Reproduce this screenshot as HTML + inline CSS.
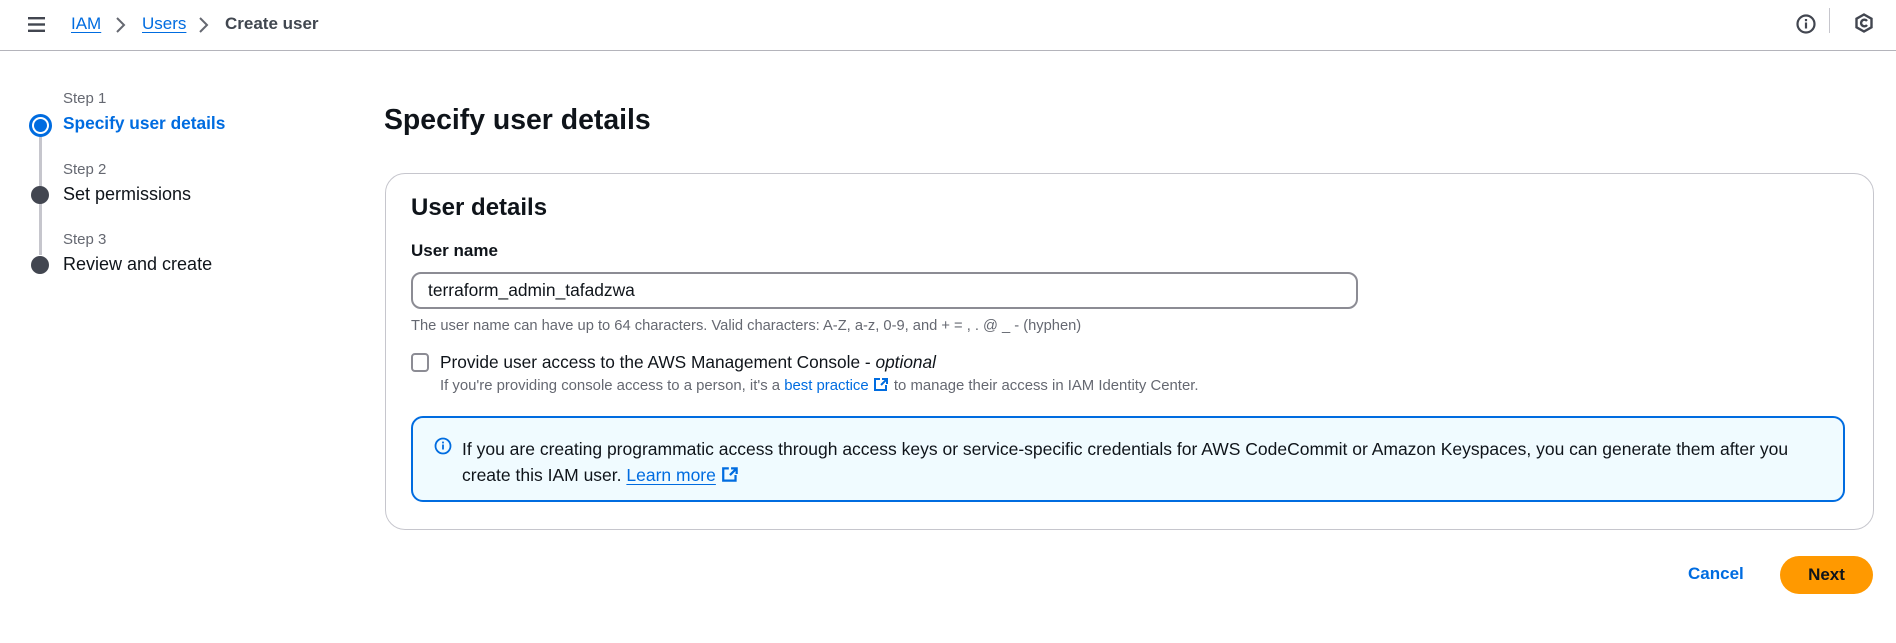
<!DOCTYPE html>
<html><head><meta charset="utf-8"><style>
*{box-sizing:border-box;margin:0;padding:0}
body{width:1896px;height:643px;background:#fff;font-family:"Liberation Sans",Arial,sans-serif;color:#0f141a;position:relative;overflow:hidden}
.a{position:absolute;white-space:nowrap}
.hdr{position:absolute;left:0;top:0;width:1896px;height:51px;border-bottom:1px solid #b4b4bb}
.link{color:#006ce0;text-decoration:underline;text-underline-offset:3px}
</style></head><body>
<div class="hdr"></div>
<svg class="a" style="left:27px;top:16px" width="20" height="17" viewBox="0 0 20 17"><rect x="1" y="1" width="17" height="2.4" fill="#424650"/><rect x="1" y="7.3" width="17" height="2.4" fill="#424650"/><rect x="1" y="13.6" width="17" height="2.4" fill="#424650"/></svg>
<div class="a link" style="left:71px;top:14px;font-size:17px">IAM</div>
<svg class="a" style="left:115px;top:16px" width="12" height="18" viewBox="0 0 12 18"><path d="M2 2l7 7-7 7" stroke="#656871" stroke-width="2" fill="none"/></svg>
<div class="a link" style="left:142px;top:14px;font-size:17px">Users</div>
<svg class="a" style="left:198px;top:16px" width="12" height="18" viewBox="0 0 12 18"><path d="M2 2l7 7-7 7" stroke="#656871" stroke-width="2" fill="none"/></svg>
<div class="a" style="left:225px;top:14px;font-size:17px;color:#414750;font-weight:bold">Create user</div>
<svg class="a" style="left:1795px;top:13px" width="22" height="22" viewBox="0 0 22 22"><circle cx="11" cy="11" r="8.5" stroke="#424650" stroke-width="2.2" fill="none"/><rect x="9.9" y="9.5" width="2.2" height="6" fill="#424650"/><rect x="9.9" y="6" width="2.2" height="2.2" fill="#424650"/></svg>
<div class="a" style="left:1829px;top:8px;width:1px;height:25px;background:#c6c6cd"></div>
<svg class="a" style="left:1853px;top:12px" width="22" height="22" viewBox="0 0 22 22"><path d="M11 2.5l7.5 4.2v8.6L11 19.5l-7.5-4.2V6.7z" stroke="#424650" stroke-width="2.4" fill="none"/><path d="M14 9a3.3 3.3 0 1 0 0 4" stroke="#424650" stroke-width="2.4" fill="none"/></svg>

<div class="a" style="left:39px;top:136px;width:3px;height:50px;background:#c6c6cd"></div>
<div class="a" style="left:39px;top:202px;width:3px;height:53px;background:#c6c6cd"></div>
<div class="a" style="left:29px;top:114px;width:23px;height:23px;border-radius:50%;border:3px solid #006ce0;background:#fff"></div>
<div class="a" style="left:34px;top:119px;width:13px;height:13px;border-radius:50%;background:#006ce0"></div>
<div class="a" style="left:31px;top:186px;width:18px;height:18px;border-radius:50%;background:#424650"></div>
<div class="a" style="left:31px;top:256px;width:18px;height:18px;border-radius:50%;background:#424650"></div>
<div class="a" style="left:63px;top:90px;font-size:15px;color:#656871">Step 1</div>
<div class="a" style="left:63px;top:113px;font-size:17.3px;color:#006ce0;font-weight:bold">Specify user details</div>
<div class="a" style="left:63px;top:161px;font-size:15px;color:#656871">Step 2</div>
<div class="a" style="left:63px;top:184px;font-size:18px;color:#0f141a">Set permissions</div>
<div class="a" style="left:63px;top:231px;font-size:15px;color:#656871">Step 3</div>
<div class="a" style="left:63px;top:254px;font-size:18px;color:#0f141a">Review and create</div>

<div class="a" style="left:384px;top:104px;font-size:28.4px;font-weight:bold">Specify user details</div>

<div class="a" style="left:385px;top:173px;width:1489px;height:357px;border:1px solid #c6c6cd;border-radius:20px"></div>
<div class="a" style="left:411px;top:194px;font-size:24px;font-weight:bold">User details</div>
<div class="a" style="left:411px;top:241px;font-size:17px;font-weight:bold">User name</div>
<div class="a" style="left:411px;top:272px;width:947px;height:37px;border:2px solid #8c8c94;border-radius:10px"></div>
<div class="a" style="left:428px;top:280px;font-size:17.4px">terraform_admin_tafadzwa</div>
<div class="a" style="left:411px;top:318px;font-size:14.7px;color:#656871">The user name can have up to 64 characters. Valid characters: A-Z, a-z, 0-9, and + = , . @ _ - (hyphen)</div>
<div class="a" style="left:411px;top:353px;width:18px;height:19px;border:2px solid #8c8c94;border-radius:4px"></div>
<div class="a" style="left:440px;top:352px;font-size:17.3px">Provide user access to the AWS Management Console - <i>optional</i></div>
<div class="a" style="left:440px;top:377px;font-size:14.9px;color:#656871">If you're providing console access to a person, it's a <span style="color:#006ce0">best practice</span> <svg width="17" height="15" viewBox="0 0 17 15" style="vertical-align:-2px"><path d="M7 2H2v11h11V8M9 2h5v5M14 2L8 8" stroke="#006ce0" stroke-width="2" fill="none"/></svg> to manage their access in IAM Identity Center.</div>

<div class="a" style="left:411px;top:416px;width:1434px;height:86px;border:2px solid #006ce0;border-radius:12px;background:#f0fbff"></div>
<svg class="a" style="left:434px;top:437px" width="18" height="18" viewBox="0 0 18 18"><circle cx="9" cy="9" r="7.5" stroke="#006ce0" stroke-width="1.8" fill="none"/><rect x="8.1" y="7.5" width="1.8" height="5" fill="#006ce0"/><rect x="8.1" y="4.6" width="1.8" height="1.8" fill="#006ce0"/></svg>
<div class="a" style="left:462px;top:436px;font-size:17.5px;line-height:26px">If you are creating programmatic access through access keys or service-specific credentials for AWS CodeCommit or Amazon Keyspaces, you can generate them after you<br>create this IAM user. <span class="link">Learn more</span> <svg width="19" height="17" viewBox="0 0 17 15" style="vertical-align:-2px"><path d="M7 2H2v11h11V8M9 2h5v5M14 2L8 8" stroke="#006ce0" stroke-width="2" fill="none"/></svg></div>

<div class="a" style="left:1688px;top:564px;font-size:17px;font-weight:bold;color:#006ce0">Cancel</div>
<div class="a" style="left:1780px;top:556px;width:93px;height:38px;border-radius:20px;background:#ff9900;font-size:17px;font-weight:bold;text-align:center;line-height:38px">Next</div>
</body></html>
